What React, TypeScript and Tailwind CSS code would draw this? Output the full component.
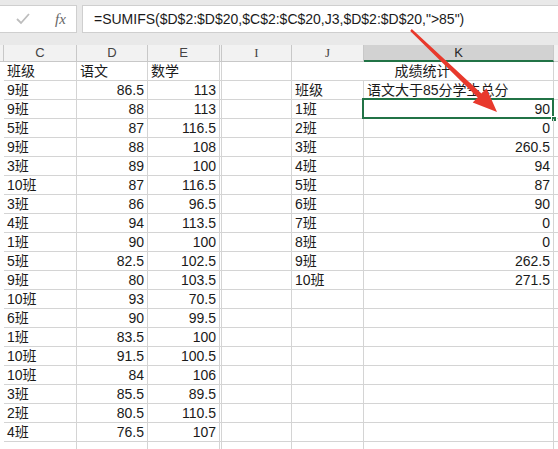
import React from 'react';

const font = { fontFamily: '"Liberation Sans", "Noto Sans CJK SC", sans-serif' };

const left: [string, string, string][] = [
  ['班级', '语文', '数学'],
  ['9班', '86.5', '113'],
  ['9班', '88', '113'],
  ['5班', '87', '116.5'],
  ['9班', '88', '108'],
  ['3班', '89', '100'],
  ['10班', '87', '116.5'],
  ['3班', '86', '96.5'],
  ['4班', '94', '113.5'],
  ['1班', '90', '100'],
  ['5班', '82.5', '102.5'],
  ['9班', '80', '103.5'],
  ['10班', '93', '70.5'],
  ['6班', '90', '99.5'],
  ['1班', '83.5', '100'],
  ['10班', '91.5', '100.5'],
  ['10班', '84', '106'],
  ['3班', '85.5', '89.5'],
  ['2班', '80.5', '110.5'],
  ['4班', '76.5', '107'],
  ['', '', ''],
];

const stats: [string, string][] = [
  ['1班', '90'],
  ['2班', '0'],
  ['3班', '260.5'],
  ['4班', '94'],
  ['5班', '87'],
  ['6班', '90'],
  ['7班', '0'],
  ['8班', '0'],
  ['9班', '262.5'],
  ['10班', '271.5'],
];

const cell = 'h-[19px] shrink-0 border-r border-b border-[#d4d4d4] flex items-center px-[3px] whitespace-nowrap';

function HeaderCell({ label, width, active, serif }: { label: string; width: string; active?: boolean; serif?: boolean }) {
  return (
    <div
      className={`${width} h-[17px] shrink-0 flex items-center justify-center border-r border-[#c8c8c8] text-[13px] ${
        active ? 'bg-[#d2d2d2] border-b-2 border-b-[#217346] text-[#262626]' : 'border-b border-b-[#c8c8c8] text-[#444]'
      }`}
      style={{ fontFamily: serif ? '"Liberation Serif", serif' : '"Liberation Sans", sans-serif' }}
    >
      {label}
    </div>
  );
}

function StatCells({ row }: { row: number }) {
  if (row === 0) {
    return <div className={`${cell} w-[262px] justify-center`}>成绩统计</div>;
  }
  if (row === 1) {
    return (
      <>
        <div className={`${cell} w-[72px]`}>班级</div>
        <div className={`${cell} w-[190px]`}>语文大于85分学生总分</div>
      </>
    );
  }
  const s = stats[row - 2];
  return (
    <>
      <div className={`${cell} w-[72px]`}>{s ? s[0] : ''}</div>
      <div className={`${cell} w-[190px] justify-end relative`}>
        {s ? s[1] : ''}
        {row === 2 && (
          <>
            <div className="absolute left-[-2px] top-[-2px] right-[-1px] bottom-[-1px] border-2 border-[#217346]" />
            <div className="absolute right-[-4px] bottom-[-4px] w-[6px] h-[6px] bg-[#217346] border border-white" />
          </>
        )}
      </div>
    </>
  );
}

export default function App() {
  return (
    <div className="w-[558px] h-[449px] overflow-hidden relative bg-white text-[14px] text-[#1a1a1a]" style={font}>
      {/* formula bar */}
      <div className="h-[45px] bg-[#e9e9e9] pt-[5px] pb-[12px] flex">
        <div className="w-[77px] h-[28px] bg-white border-y border-r border-[#cfcfcf] flex items-center">
          <svg width="14" height="12" viewBox="0 0 14 12" className="ml-[16px]">
            <polyline points="1,6 5,10 13,1" fill="none" stroke="#bdbdbd" strokeWidth="1.8" />
          </svg>
          <span
            className="ml-[25px] text-[15px] italic text-[#666]"
            style={{ fontFamily: '"Liberation Serif", serif' }}
          >
            fx
          </span>
        </div>
        <div className="w-[5px]" />
        <div className="flex-1 h-[28px] bg-white border-y border-l border-[#cfcfcf] flex items-center pl-[11px] text-[14px] whitespace-nowrap">
          =SUMIFS($D$2:$D$20,$C$2:$C$20,J3,$D$2:$D$20,"&gt;85")
        </div>
      </div>

      {/* column headers */}
      <div className="flex bg-[#f2f2f2]">
        <div className="w-[4px] h-[17px] shrink-0 border-r border-b border-[#c8c8c8]" />
        <HeaderCell label="C" width="w-[73px]" />
        <HeaderCell label="D" width="w-[71px]" />
        <HeaderCell label="E" width="w-[72px]" />
        <div className="w-[2px] h-[17px] shrink-0 border-r border-b border-[#c8c8c8]" />
        <HeaderCell label="I" width="w-[70px]" serif />
        <HeaderCell label="J" width="w-[72px]" serif />
        <HeaderCell label="K" width="w-[190px]" active />
        <div className="flex-1 h-[17px] border-b border-[#c8c8c8]" />
      </div>

      {/* rows */}
      {left.map((r, i) => (
        <div key={i} className="flex">
          <div className="w-[4px] h-[19px] shrink-0" />
          <div className={`${cell} w-[73px]`}>{r[0]}</div>
          <div className={`${cell} w-[71px] ${i === 0 ? '' : 'justify-end'}`}>{r[1]}</div>
          <div className={`${cell} w-[72px] ${i === 0 ? '' : 'justify-end'}`}>{r[2]}</div>
          <div className="w-[2px] h-[19px] shrink-0 border-r border-b border-[#d4d4d4]" />
          <div className={`${cell} w-[70px]`} />
          <StatCells row={i} />
          <div className={`${cell} flex-1`} />
        </div>
      ))}

      {/* annotation arrow */}
      <svg className="absolute left-0 top-0 pointer-events-none" width="558" height="449">
        <polygon
          points="410.2,30.9 477.7,97.4 472.7,102.6 497,112 486.5,88.2 481.5,93.4 411.8,29.1"
          fill="#e8392c"
        />
      </svg>
    </div>
  );
}
